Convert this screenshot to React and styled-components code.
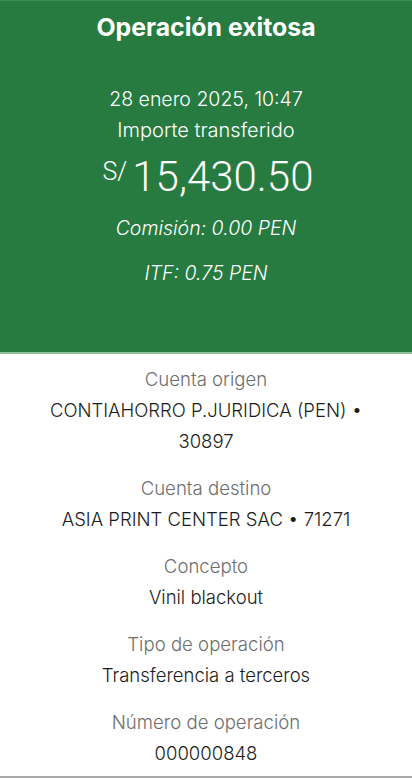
import React from 'react';
import styled, { createGlobalStyle } from 'styled-components';

const details = [
  { label: 'Cuenta origen', value: 'CONTIAHORRO P.JURIDICA (PEN) • 30897' },
  { label: 'Cuenta destino', value: 'ASIA PRINT CENTER SAC • 71271' },
  { label: 'Concepto', value: 'Vinil blackout' },
  { label: 'Tipo de operación', value: 'Transferencia a terceros' },
  { label: 'Número de operación', value: '000000848' },
];

const App = () => {
  return (
    <>
      <GlobalStyle />
      <Screen>
        <Header>
          <Title>Operación exitosa</Title>
          <DateLine>28 enero 2025, 10:47</DateLine>
          <Caption>Importe transferido</Caption>
          <Amount>
            <Currency>S/</Currency>
            15,430.50
          </Amount>
          <Fee>Comisión: 0.00 PEN</Fee>
          <Fee gap={14}>ITF: 0.75 PEN</Fee>
        </Header>
        <Details>
          {details.map((d) => (
            <Group key={d.label}>
              <Label>{d.label}</Label>
              <Value>{d.value}</Value>
            </Group>
          ))}
        </Details>
      </Screen>
    </>
  );
};

export default App;

const GlobalStyle = createGlobalStyle`
    body{
        margin: 0;
        background: #fff;
        font-family: Inter, Roboto, "Liberation Sans", sans-serif;
    }
`;
const Screen = styled.div`
    width: 412px;
    height: 778px;
    display: flex;
    flex-direction: column;
    overflow: hidden;
    border-bottom: 2px solid #a9a9a9;
    box-sizing: border-box;
`;
const Header = styled.div`
    height: 354px;
    flex-shrink: 0;
    background-color: #277b40;
    border-top: 1px solid #3c8a52;
    border-bottom: 2px solid #8fbf9c;
    box-sizing: border-box;
    display: flex;
    flex-direction: column;
    align-items: center;
    color: #fff;
`;
const Title = styled.div`
    margin-top: 10px;
    font-size: 24.8px;
    line-height: 32px;
    font-weight: 700;
`;
const DateLine = styled.div`
    margin-top: 41px;
    font-size: 19.5px;
    line-height: 31px;
    font-weight: 300;
`;
const Caption = styled(DateLine)`
    margin-top: 0;
    font-size: 20px;
`;
const Amount = styled.div`
    margin-top: 6px;
    padding-left: 4px;
    display: flex;
    align-items: flex-start;
    font-family: Roboto, "Liberation Sans", sans-serif;
    font-size: 42px;
    line-height: 50px;
    font-weight: 300;
`;
const Currency = styled.span`
    font-size: 25px;
    line-height: 28px;
    margin-top: 6px;
    margin-right: 5px;
`;
const Fee = styled.div`
    margin-top: ${({ gap }) => gap || 11}px;
    font-size: 19.5px;
    line-height: 31px;
    font-style: italic;
    font-weight: 300;
`;
const Details = styled.div`
    padding: 10px 36px 0;
    display: flex;
    flex-direction: column;
    gap: 16px;
    text-align: center;
`;
const Group = styled.div`
    display: flex;
    flex-direction: column;
`;
const Label = styled.div`
    font-size: 18.6px;
    line-height: 31px;
    color: #6e6e6e;
    font-weight: 300;
`;
const Value = styled.div`
    font-size: 18.5px;
    line-height: 31px;
    color: #1c1c1c;
    font-weight: 300;
`;
